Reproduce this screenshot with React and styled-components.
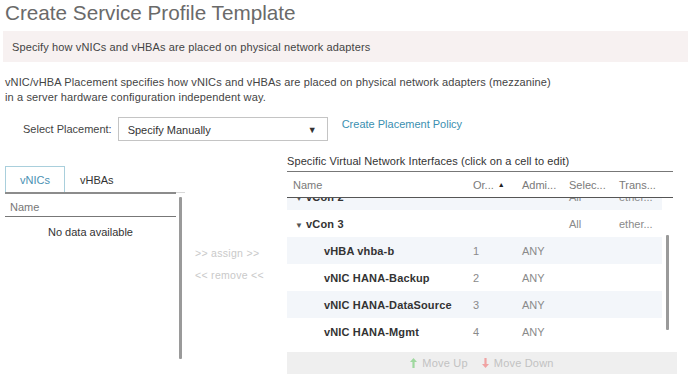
import styled, { createGlobalStyle } from "styled-components";

const GlobalStyle = createGlobalStyle`
  html, body {
    margin: 0;
    padding: 0;
    background: #ffffff;
  }
  body {
    font-family: "Liberation Sans", Arial, sans-serif;
    color: #333;
  }
`;

const Page = styled.div`
  width: 692px;
  height: 390px;
  overflow: hidden;
  padding: 0 4px 0 5px;
  box-sizing: border-box;
`;

const Title = styled.h1`
  margin: 0;
  padding-top: 1px;
  height: 29px;
  font-size: 20.7px;
  font-weight: 400;
  color: #6a6a6a;
`;

const Banner = styled.div`
  margin: 1px 0 0 -2px;
  height: 31px;
  display: flex;
  align-items: center;
  padding-left: 9px;
  background: #f7f1f1;
  font-size: 11px;
  color: #444;
  letter-spacing: 0.12px;
`;

const Description = styled.p`
  margin: 13px 0 0 0;
  font-size: 11px;
  line-height: 15px;
  color: #444;
  letter-spacing: 0.12px;
`;

const PlacementRow = styled.div`
  display: flex;
  align-items: center;
  margin: 12px 0 0 18px;
  height: 24px;
`;

const Label = styled.span`
  font-size: 11px;
  color: #444;
  margin-right: 6px;
`;

const SelectBox = styled.div`
  width: 210px;
  height: 24px;
  box-sizing: border-box;
  border: 1px solid #c4c4c4;
  display: flex;
  align-items: center;
  justify-content: space-between;
  padding: 2px 10px 0 9px;
  font-size: 11px;
  color: #333;
`;

const Caret = styled.span`
  font-size: 9px;
  color: #333;
`;

const Link = styled.a`
  margin: -10px 0 0 14px;
  font-size: 11px;
  color: #3b8fb0;
  text-decoration: none;
`;

const Main = styled.div`
  display: flex;
  margin-top: 10px;
`;

const LeftColumn = styled.div`
  width: 180px;
  padding-top: 15px;
`;

const Tabs = styled.div`
  display: flex;
  align-items: flex-end;
  height: 26px;
  border-bottom: 1px solid #d8d8d8;
  position: relative;
  &::after {
    content: "";
    position: absolute;
    left: 0;
    bottom: -2px;
    width: 171px;
    height: 2px;
    background: #8c8c8c;
  }
`;

const Tab = styled.div`
  height: 26px;
  box-sizing: border-box;
  padding: 0 14px;
  display: flex;
  align-items: center;
  font-size: 11px;
  color: ${(p) => (p.$active ? "#4a91b3" : "#333")};
  border: 1px solid ${(p) => (p.$active ? "#a9cfdc" : "transparent")};
  border-bottom: none;
  margin-right: ${(p) => (p.$active ? 4 : 0)}px;
  ${(p) => !p.$active && "padding-left: 10px;"}
`;

const ListArea = styled.div`
  display: flex;
  margin-top: 4px;
`;

const ListBox = styled.div`
  width: 171px;
`;

const ListHeader = styled.div`
  height: 19px;
  display: flex;
  align-items: center;
  padding-left: 5px;
  border-bottom: 1px solid #777;
  font-size: 11px;
  color: #777;
`;

const Empty = styled.div`
  text-align: center;
  padding-top: 9px;
  font-size: 11px;
  color: #333;
`;

const VScroll = styled.div`
  width: 3px;
  height: ${(p) => p.$h}px;
  margin-top: ${(p) => p.$top || 0}px;
  margin-left: ${(p) => p.$left || 0}px;
  background: #9a9a9a;
  border-radius: 1px;
  flex-shrink: 0;
`;

const MiddleColumn = styled.div`
  width: 102px;
  display: flex;
  flex-direction: column;
  padding: 96px 0 0 10px;
  gap: 10px;
  box-sizing: border-box;
`;

const MoveLink = styled.span`
  font-size: 10.5px;
  color: #c9c9c9;
  letter-spacing: 0.3px;
  line-height: 12px;
`;

const RightColumn = styled.div`
  width: 390px;
`;

const Caption = styled.div`
  height: 20px;
  display: flex;
  align-items: center;
  font-size: 11px;
  color: #333;
  letter-spacing: 0.1px;
  width: 386px;
  border-bottom: 1px solid #777;
`;

const Grid = `
  display: grid;
  grid-template-columns: 186px 49px 47px 50px 43px;
`;

const HeaderRow = styled.div`
  ${Grid}
  width: 386px;
  height: 25px;
  align-items: center;
  border-bottom: 1px solid #555;
  font-size: 11px;
  color: #7a7a7a;
`;

const HeadCell = styled.div`
  padding-left: ${(p) => p.$pad ?? 0}px;
  display: flex;
  align-items: center;
  gap: 4px;
`;

const SortUp = styled.span`
  font-size: 7px;
  color: #222;
`;

const BodyArea = styled.div`
  display: flex;
`;

const Viewport = styled.div`
  width: 375px;
  height: 148px;
  overflow: hidden;
`;

const Rows = styled.div`
  margin-top: -15px;
`;

const Row = styled.div`
  ${Grid}
  height: 27px;
  align-items: center;
  background: ${(p) => (p.$shaded ? "#f3f6fa" : "#ffffff")};
  font-size: 11px;
`;

const NameCell = styled.div`
  padding-left: ${(p) => p.$indent}px;
  font-weight: 700;
  color: #333;
  letter-spacing: 0.15px;
  display: flex;
  align-items: center;
  gap: 3px;
`;

const Cell = styled.div`
  color: #8a8a8a;
`;

const Triangle = styled.span`
  font-size: 8px;
  color: #555;
  margin-top: 3px;
`;

const Footer = styled.div`
  margin-top: 6px;
  width: 390px;
  height: 22px;
  background: #efefef;
  display: flex;
  align-items: center;
  justify-content: center;
  gap: 14px;
`;

const FootButton = styled.span`
  display: flex;
  align-items: center;
  gap: 5px;
  font-size: 11px;
  color: #c2c2c2;
  letter-spacing: 0.2px;
`;

const Arrow = ({ up }) => (
  <svg width="7" height="10" viewBox="0 0 7 10">
    {up ? (
      <path d="M3.5 0 L7 4 H4.6 V10 H2.4 V4 H0 Z" fill="#9fd89f" />
    ) : (
      <path d="M3.5 10 L7 6 H4.6 V0 H2.4 V6 H0 Z" fill="#f0a3a3" />
    )}
  </svg>
);

const rows = [
  { name: "vCon 2", group: true, sel: "All", trans: "ether..." },
  { name: "vCon 3", group: true, sel: "All", trans: "ether..." },
  { name: "vHBA vhba-b", order: "1", admin: "ANY" },
  { name: "vNIC HANA-Backup", order: "2", admin: "ANY" },
  { name: "vNIC HANA-DataSource", order: "3", admin: "ANY" },
  { name: "vNIC HANA-Mgmt", order: "4", admin: "ANY" },
];

export default function App() {
  return (
    <Page>
      <GlobalStyle />
      <Title>Create Service Profile Template</Title>
      <Banner>Specify how vNICs and vHBAs are placed on physical network adapters</Banner>
      <Description>
        vNIC/vHBA Placement specifies how vNICs and vHBAs are placed on physical network adapters (mezzanine)
        <br />
        in a server hardware configuration independent way.
      </Description>
      <PlacementRow>
        <Label>Select Placement:</Label>
        <SelectBox>
          <span>Specify Manually</span>
          <Caret>▼</Caret>
        </SelectBox>
        <Link>Create Placement Policy</Link>
      </PlacementRow>

      <Main>
        <LeftColumn>
          <Tabs>
            <Tab $active>vNICs</Tab>
            <Tab>vHBAs</Tab>
          </Tabs>
          <ListArea>
            <ListBox>
              <ListHeader>Name</ListHeader>
              <Empty>No data available</Empty>
            </ListBox>
            <VScroll $h={162} $left={3} />
          </ListArea>
        </LeftColumn>

        <MiddleColumn>
          <MoveLink>&gt;&gt; assign &gt;&gt;</MoveLink>
          <MoveLink>&lt;&lt; remove &lt;&lt;</MoveLink>
        </MiddleColumn>

        <RightColumn>
          <Caption>Specific Virtual Network Interfaces (click on a cell to edit)</Caption>
          <HeaderRow>
            <HeadCell $pad={6}>Name</HeadCell>
            <HeadCell>
              Or...<SortUp>▲</SortUp>
            </HeadCell>
            <HeadCell>Admi...</HeadCell>
            <HeadCell>Selec...</HeadCell>
            <HeadCell>Trans...</HeadCell>
          </HeaderRow>
          <BodyArea>
            <Viewport>
              <Rows>
                {rows.map((r, i) => (
                  <Row key={r.name} $shaded={i % 2 === 0}>
                    <NameCell $indent={r.group ? 8 : 37}>
                      {r.group && <Triangle>▼</Triangle>}
                      {r.name}
                    </NameCell>
                    <Cell>{r.order}</Cell>
                    <Cell>{r.admin}</Cell>
                    <Cell>{r.sel}</Cell>
                    <Cell>{r.trans}</Cell>
                  </Row>
                ))}
              </Rows>
            </Viewport>
            <VScroll $h={95} $top={37} $left={4} />
          </BodyArea>
          <Footer>
            <FootButton>
              <Arrow up />
              Move Up
            </FootButton>
            <FootButton>
              <Arrow />
              Move Down
            </FootButton>
          </Footer>
        </RightColumn>
      </Main>
    </Page>
  );
}
